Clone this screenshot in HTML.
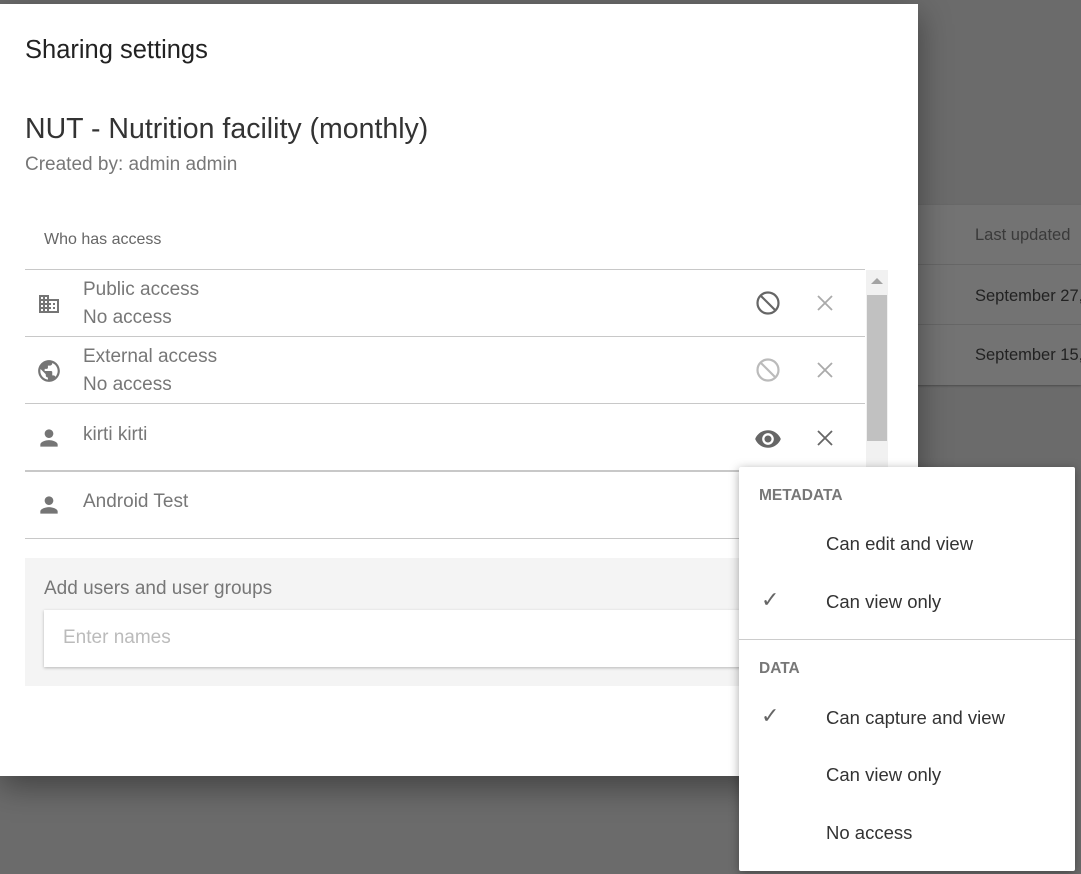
<!DOCTYPE html>
<html><head><meta charset="utf-8"><style>
*{margin:0;padding:0;box-sizing:border-box}
body{width:1081px;height:874px;overflow:hidden;background:#6b6b6b;font-family:"Liberation Sans",sans-serif;position:relative}
.a{position:absolute;white-space:nowrap}
.card{position:absolute;left:900px;top:205px;width:181px;height:180px;background:#737373;box-shadow:0 1px 2px rgba(0,0,0,.3)}
.dlg{position:absolute;left:0;top:4px;width:918px;height:772px;background:#fff;box-shadow:0 10px 30px rgba(0,0,0,.4)}
.line{position:absolute;left:25px;width:840px;height:1px;background:#c8c8c8}
.menu{position:absolute;left:739px;top:467px;width:336px;height:404px;background:#fff;border-radius:2px;box-shadow:0 2px 10px rgba(0,0,0,.35)}
.mi{position:absolute;left:87px;font-size:18.5px;color:#333}
.ck{position:absolute;left:22px;font-size:22px;color:#666}
.r{font-size:19px;color:#777}
</style></head><body>
<div class="card">
<div class="a" style="left:75px;top:21px;font-size:16.5px;color:#3a3a3a">Last updated</div>
<div style="position:absolute;left:0;top:59px;width:181px;height:1px;background:#666"></div>
<div class="a" style="left:75px;top:82px;font-size:16.5px;color:#222">September 27,</div>
<div style="position:absolute;left:0;top:119px;width:181px;height:1px;background:#666"></div>
<div class="a" style="left:75px;top:141px;font-size:16.5px;color:#222">September 15,</div>
</div>
<div class="dlg">
<div class="a" style="left:25px;top:32px;font-size:25.5px;color:#222">Sharing settings</div>
<div class="a" style="left:25px;top:109px;font-size:28.5px;color:#333;font-weight:300">NUT - Nutrition facility (monthly)</div>
<div class="a" style="left:25px;top:150px;font-size:19px;color:#777">Created by: admin admin</div>
<div class="a" style="left:44px;top:227px;font-size:16px;color:#666">Who has access</div>
<div class="line" style="top:265px"></div>
<div class="line" style="top:332px"></div>
<div class="line" style="top:399px"></div>
<div class="line" style="top:466px;height:2px"></div>
<div class="line" style="top:534px"></div>
<div style="position:absolute;left:866px;top:266px;width:22px;height:270px;background:#f1f1f1"></div>
<div style="position:absolute;left:867px;top:291px;width:20px;height:146px;background:#c1c1c1"></div>
<div style="position:absolute;left:871px;top:274px;width:0;height:0;border-left:6px solid transparent;border-right:6px solid transparent;border-bottom:6px solid #a3a3a3"></div>
<svg class="a" style="left:37px;top:288px" width="24" height="24" viewBox="0 0 24 24"><path fill="#757575" d="M12 7V3H2v18h20V7H12zM6 19H4v-2h2v2zm0-4H4v-2h2v2zm0-4H4V9h2v2zm0-4H4V5h2v2zm4 12H8v-2h2v2zm0-4H8v-2h2v2zm0-4H8V9h2v2zm0-4H8V5h2v2zm10 12h-8v-2h2v-2h-2v-2h2v-2h-2V9h8v10zm-2-8h-2v2h2v-2zm0 4h-2v2h2v-2z"/></svg>
<div class="a r" style="left:83px;top:275px">Public access</div>
<div class="a r" style="left:83px;top:303px">No access</div>
<svg class="a" style="left:36px;top:354px" width="26" height="26" viewBox="0 0 24 24"><path fill="#757575" d="M12 2C6.48 2 2 6.48 2 12s4.48 10 10 10 10-4.48 10-10S17.52 2 12 2zm-1 17.93c-3.950-.49-7-3.85-7-7.93 0-.62.08-1.21.21-1.79L9 15v1c0 1.1.9 2 2 2v1.930zm6.9-2.54c-.26-.81-1-1.39-1.9-1.39h-1v-3c0-.55-.45-1-1-1H8v-2h2c.55 0 1-.45 1-1V7h2c1.1 0 2-.9 2-2v-.41c2.93 1.19 5 4.06 5 7.41 0 2.08-.8 3.97-2.1 5.39z"/></svg>
<div class="a r" style="left:83px;top:342px">External access</div>
<div class="a r" style="left:83px;top:370px">No access</div>
<svg class="a" style="left:36px;top:421px" width="26" height="26" viewBox="0 0 24 24"><path fill="#757575" d="M12 12c2.21 0 4-1.79 4-4s-1.79-4-4-4-4 1.790-4 4 1.79 4 4 4zm0 2c-2.67 0-8 1.34-8 4v2h16v-2c0-2.660-5.33-4-8-4z"/></svg>
<div class="a r" style="left:83px;top:420px">kirti kirti</div>
<svg class="a" style="left:36px;top:488px" width="26" height="26" viewBox="0 0 24 24"><path fill="#757575" d="M12 12c2.21 0 4-1.79 4-4s-1.79-4-4-4-4 1.790-4 4 1.79 4 4 4zm0 2c-2.67 0-8 1.34-8 4v2h16v-2c0-2.660-5.33-4-8-4z"/></svg>
<div class="a r" style="left:83px;top:487px">Android Test</div>
<svg class="a" style="left:755px;top:286px" width="26" height="26" viewBox="0 0 26 26"><circle cx="13" cy="13" r="10.5" fill="none" stroke="#666" stroke-width="2.2"/><line x1="5.6" y1="5.6" x2="20.4" y2="20.4" stroke="#666" stroke-width="2.2"/></svg>
<svg class="a" style="left:755px;top:353px" width="26" height="26" viewBox="0 0 26 26"><circle cx="13" cy="13" r="10.5" fill="none" stroke="#bbb" stroke-width="2.2"/><line x1="5.6" y1="5.6" x2="20.4" y2="20.4" stroke="#bbb" stroke-width="2.2"/></svg>
<svg class="a" style="left:816px;top:290px" width="18" height="18" viewBox="0 0 18 18"><path d="M2 2L16 16M16 2L2 16" stroke="#aaa" stroke-width="1.8"/></svg>
<svg class="a" style="left:816px;top:357px" width="18" height="18" viewBox="0 0 18 18"><path d="M2 2L16 16M16 2L2 16" stroke="#aaa" stroke-width="1.8"/></svg>
<svg class="a" style="left:816px;top:425px" width="18" height="18" viewBox="0 0 18 18"><path d="M2 2L16 16M16 2L2 16" stroke="#666" stroke-width="1.8"/></svg>
<svg class="a" style="left:754px;top:421px" width="28" height="28" viewBox="0 0 24 24"><path fill="#666" d="M12 4.5C7 4.5 2.73 7.61 1 12c1.73 4.39 6 7.5 11 7.5s9.27-3.11 11-7.5c-1.73-4.39-6-7.5-11-7.5zM12 17c-2.76 0-5-2.24-5-5s2.24-5 5-5 5 2.24 5 5-2.24 5-5 5zm0-8c-1.66 0-3 1.34-3 3s1.34 3 3 3 3-1.34 3-3-1.34-3-3-3z"/></svg>
<div style="position:absolute;left:25px;top:554px;width:840px;height:128px;background:#f4f4f4"></div>
<div class="a" style="left:44px;top:574px;font-size:19px;color:#777">Add users and user groups</div>
<div style="position:absolute;left:44px;top:606px;width:800px;height:57px;background:#fff;box-shadow:0 1px 3px rgba(0,0,0,.25)"></div>
<div class="a" style="left:63px;top:623px;font-size:19px;color:#bbb">Enter names</div>
</div>
<div class="menu">
<div class="a" style="left:20px;top:20px;font-size:15.5px;font-weight:bold;color:#777">METADATA</div>
<div class="mi a" style="top:66px">Can edit and view</div>
<div class="ck a" style="top:120px">✓</div>
<div class="mi a" style="top:124px">Can view only</div>
<div style="position:absolute;left:0;top:172px;width:336px;height:1px;background:#ccc"></div>
<div class="a" style="left:20px;top:193px;font-size:15.5px;font-weight:bold;color:#777">DATA</div>
<div class="ck a" style="top:236px">✓</div>
<div class="mi a" style="top:240px">Can capture and view</div>
<div class="mi a" style="top:297px">Can view only</div>
<div class="mi a" style="top:355px">No access</div>
</div>
</body></html>
